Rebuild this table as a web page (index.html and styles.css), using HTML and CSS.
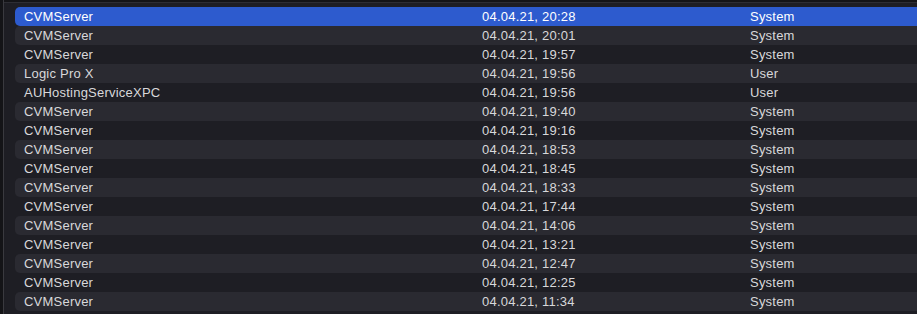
FILE: index.html
```html
<!DOCTYPE html>
<html>
<head>
<meta charset="utf-8">
<link rel="stylesheet" href="styles.css">
</head>
<body>
<div class="frame">
  <div class="side"></div>
  <div class="main">
    <div class="topbar"></div>
    <div class="list">
      <div class="row selected"><span class="c1">CVMServer</span><span class="c2">04.04.21, 20:28</span><span class="c3">System</span></div>
      <div class="row alt"><span class="c1">CVMServer</span><span class="c2">04.04.21, 20:01</span><span class="c3">System</span></div>
      <div class="row"><span class="c1">CVMServer</span><span class="c2">04.04.21, 19:57</span><span class="c3">System</span></div>
      <div class="row alt"><span class="c1">Logic Pro X</span><span class="c2">04.04.21, 19:56</span><span class="c3">User</span></div>
      <div class="row"><span class="c1">AUHostingServiceXPC</span><span class="c2">04.04.21, 19:56</span><span class="c3">User</span></div>
      <div class="row alt"><span class="c1">CVMServer</span><span class="c2">04.04.21, 19:40</span><span class="c3">System</span></div>
      <div class="row"><span class="c1">CVMServer</span><span class="c2">04.04.21, 19:16</span><span class="c3">System</span></div>
      <div class="row alt"><span class="c1">CVMServer</span><span class="c2">04.04.21, 18:53</span><span class="c3">System</span></div>
      <div class="row"><span class="c1">CVMServer</span><span class="c2">04.04.21, 18:45</span><span class="c3">System</span></div>
      <div class="row alt"><span class="c1">CVMServer</span><span class="c2">04.04.21, 18:33</span><span class="c3">System</span></div>
      <div class="row"><span class="c1">CVMServer</span><span class="c2">04.04.21, 17:44</span><span class="c3">System</span></div>
      <div class="row alt"><span class="c1">CVMServer</span><span class="c2">04.04.21, 14:06</span><span class="c3">System</span></div>
      <div class="row"><span class="c1">CVMServer</span><span class="c2">04.04.21, 13:21</span><span class="c3">System</span></div>
      <div class="row alt"><span class="c1">CVMServer</span><span class="c2">04.04.21, 12:47</span><span class="c3">System</span></div>
      <div class="row"><span class="c1">CVMServer</span><span class="c2">04.04.21, 12:25</span><span class="c3">System</span></div>
      <div class="row alt"><span class="c1">CVMServer</span><span class="c2">04.04.21, 11:34</span><span class="c3">System</span></div>
    </div>
  </div>
</div>
</body>
</html>
```
FILE: styles.css
```css
html, body {
  margin: 0;
  padding: 0;
  background: #1e1e24;
  width: 917px;
  height: 314px;
  overflow: hidden;
}
.frame {
  display: flex;
  height: 314px;
  font-family: "Liberation Sans", Arial, sans-serif;
  font-size: 13px;
  letter-spacing: 0.22px;
  color: #d8d8da;
}
.side {
  width: 3px;
  flex: none;
  background: #141417;
  border-right: 1px solid #3a3a3f;
}
.main {
  flex: 1;
  display: flex;
  flex-direction: column;
}
.topbar {
  height: 2px;
  background: #141417;
  border-bottom: 1px solid #2e2e34;
}
.list {
  display: flex;
  flex-direction: column;
  padding: 4px 0 0 11px;
}
.row {
  display: flex;
  height: 19px;
  align-items: center;
  border-radius: 5px 0 0 5px;
  padding-left: 9px;
}
.row.alt {
  background: #2a2a31;
}
.row.selected {
  background: #2d5bce;
  color: #ffffff;
}
.c1 { width: 458px; flex: none; }
.c2 { width: 268px; flex: none; }
.c3 { flex: 1; }
```
